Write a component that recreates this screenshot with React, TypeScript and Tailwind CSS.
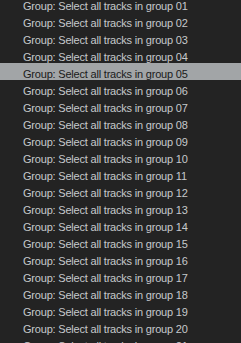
import React from 'react';

const rows = Array.from({ length: 21 }, (_, i) => String(i + 1).padStart(2, '0'));

const App: React.FC = () => {
    const selected = '05';
    return (
        <div className="w-[241px] h-[343px] overflow-hidden bg-[#232323]" style={{ fontFamily: '"Liberation Sans", Arial, sans-serif' }}>
            {/* list is scrolled a few px, first row starts above the top edge */}
            <div className="-mt-[5px] flex flex-col">
                {rows.map(n => (
                    <div
                        key={n}
                        className={`h-[17px] pl-[23px] pt-[6px] text-[11px] leading-[11px] tracking-[-0.2px] whitespace-nowrap ${n === selected ? 'bg-[#a2a5a7] text-[#1a1a1a]' : 'text-[#c6c9cc]'}`}
                    >
                        Group: Select all tracks in group {n}
                    </div>
                ))}
            </div>
        </div>
    );
};

export default App;
